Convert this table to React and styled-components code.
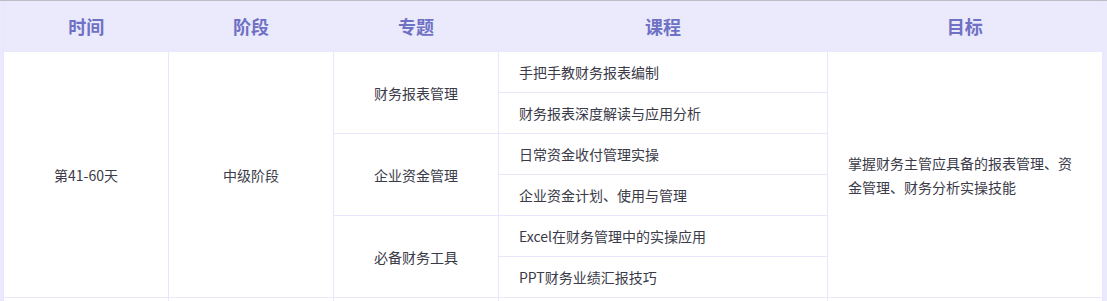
import React from "react";
import styled, { createGlobalStyle } from "styled-components";

const GlobalStyle = createGlobalStyle`
  body {
    margin: 0;
    background: #ebe9fc;
    font-family: "Noto Sans CJK SC", "Noto Sans", sans-serif;
    overflow: hidden;
  }
`;

const rows = [
  {
    topic: "财务报表管理",
    courses: ["手把手教财务报表编制", "财务报表深度解读与应用分析"],
  },
  {
    topic: "企业资金管理",
    courses: ["日常资金收付管理实操", "企业资金计划、使用与管理"],
  },
  {
    topic: "必备财务工具",
    courses: ["Excel在财务管理中的实操应用", "PPT财务业绩汇报技巧"],
  },
];

const total = rows.reduce((n, r) => n + r.courses.length, 0);

const App = () => {
  return (
    <Wrapper>
      <GlobalStyle />
      <Table>
        <colgroup>
          <col style={{ width: 165 }} />
          <col style={{ width: 165 }} />
          <col style={{ width: 165 }} />
          <col style={{ width: 329 }} />
          <col />
        </colgroup>
        <thead>
          <tr>
            <Th>时间</Th>
            <Th>阶段</Th>
            <Th>专题</Th>
            <Th>课程</Th>
            <Th>目标</Th>
          </tr>
        </thead>
        <tbody>
          {rows.map((row, i) =>
            row.courses.map((course, j) => (
              <tr key={course}>
                {i === 0 && j === 0 && (
                  <>
                    <Td rowSpan={total}>第41-60天</Td>
                    <Td rowSpan={total}>中级阶段</Td>
                  </>
                )}
                {j === 0 && <Td rowSpan={row.courses.length}>{row.topic}</Td>}
                <Td $left>{course}</Td>
                {i === 0 && j === 0 && (
                  <Td $left rowSpan={total}>
                    掌握财务主管应具备的报表管理、资金管理、财务分析实操技能
                  </Td>
                )}
              </tr>
            ))
          )}
          <tr>
            <Td />
            <Td />
            <Td />
            <Td />
            <Td />
          </tr>
        </tbody>
      </Table>
    </Wrapper>
  );
};

const Wrapper = styled.div`
  border-top: 1px solid #bcbcc4;
  padding: 0 4px 0 3px;
`;

const Table = styled.table`
  width: 100%;
  table-layout: fixed;
  border-collapse: collapse;
  background: #fff;
  border: 1px solid #e9e7fb;
  border-top: none;
`;

const Th = styled.th`
  height: 50px;
  padding: 0;
  background: #ebe9fc;
  color: #6e71c4;
  font-size: 18px;
  font-weight: 700;
  text-align: center;
  vertical-align: middle;
`;

const Td = styled.td`
  height: 40px;
  padding: 0 20px;
  border: 1px solid #e9e7fb;
  color: #3a3a48;
  font-size: 14px;
  line-height: 24px;
  text-align: ${(p) => (p.$left ? "left" : "center")};
  vertical-align: middle;
`;

export default App;
